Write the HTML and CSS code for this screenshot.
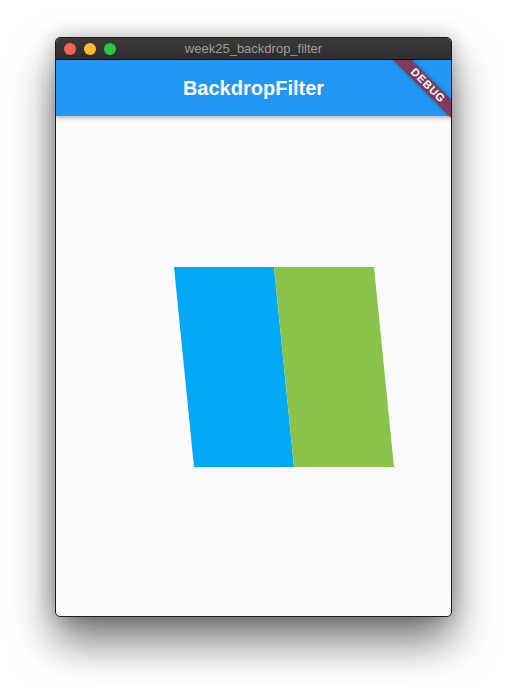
FILE: index.html
```html
<!DOCTYPE html>
<html>
<head>
<meta charset="utf-8">
<link rel="stylesheet" href="styles.css">
</head>
<body>
<div class="window">
  <div class="titlebar">
    <div class="lights">
      <span class="light red"></span>
      <span class="light yellow"></span>
      <span class="light green"></span>
    </div>
    <div class="wintitle">week25_backdrop_filter</div>
  </div>
  <div class="app">
    <div class="appbar">BackdropFilter</div>
    <div class="content">
      <div class="shape">
        <div class="half blue"></div>
        <div class="half greenbox"></div>
      </div>
    </div>
    <div class="banner">DEBUG</div>
  </div>
</div>
</body>
</html>
```
FILE: styles.css
```css
html, body {
  margin: 0;
  padding: 0;
  background: #ffffff;
}
body {
  box-sizing: border-box;
  min-height: 691px;
  padding: 37px 0 0 55px;
  font-family: "Liberation Sans", Arial, sans-serif;
}
.window {
  position: relative;
  width: 397px;
  height: 580px;
  box-sizing: border-box;
  border: 1px solid #1c1c1c;
  border-radius: 5px;
  overflow: hidden;
  background: #fafafa;
  box-shadow: 0 24px 44px rgba(0,0,0,0.55), 0 0 18px rgba(0,0,0,0.22);
  display: flex;
  flex-direction: column;
}
.titlebar {
  position: relative;
  height: 21px;
  flex: none;
  border-bottom: 1px solid #0c0c0c;
  background: linear-gradient(#3d3a3a, #2f2d2d);
  display: flex;
  align-items: center;
}
.lights {
  display: flex;
  gap: 8px;
  padding-left: 8px;
}
.light {
  width: 12px;
  height: 12px;
  border-radius: 50%;
  display: block;
}
.red { background: #fe5f57; }
.yellow { background: #febc2e; }
.green { background: #28c840; }
.wintitle {
  position: absolute;
  left: 0;
  right: 0;
  top: 0;
  line-height: 21px;
  text-align: center;
  font-size: 13px;
  color: #a09d9d;
}
.app {
  position: relative;
  flex: 1;
  overflow: hidden;
  display: flex;
  flex-direction: column;
}
.appbar {
  height: 56px;
  flex: none;
  background: #2196f3;
  color: #ffffff;
  font-size: 20px;
  font-weight: bold;
  display: flex;
  align-items: center;
  justify-content: center;
  box-shadow: 0 2px 4px rgba(0,0,0,0.25);
  position: relative;
  z-index: 1;
}
.content {
  flex: 1;
  padding: 151px 0 0 118px;
}
.shape {
  width: 200px;
  height: 200px;
  display: flex;
  transform-origin: 0 0;
  transform: skewX(5.71deg);
}
.half {
  width: 100px;
  height: 200px;
}
.blue { background: #03a9f4; }
.greenbox { background: #8bc34a; }
.banner {
  position: absolute;
  z-index: 2;
  left: 312px;
  top: 19px;
  width: 120px;
  height: 13px;
  line-height: 13px;
  transform: rotate(45deg);
  background: #7e3b5c;
  color: #ffffff;
  font-size: 11px;
  font-weight: 900;
  text-align: center;
  letter-spacing: 0.8px;
  box-shadow: 0 0 4px rgba(0,0,0,0.25);
}
```
